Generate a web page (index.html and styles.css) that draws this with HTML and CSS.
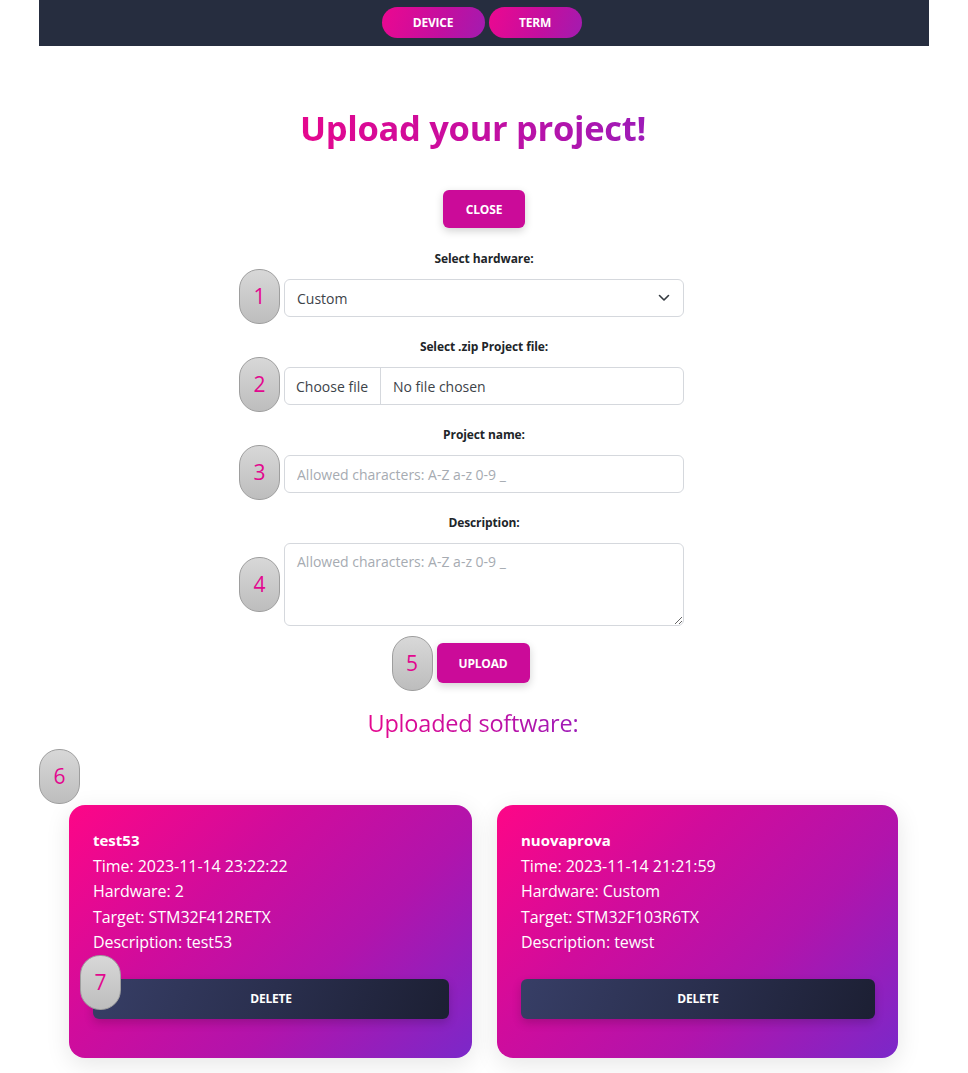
FILE: index.html
```html
<!DOCTYPE html>
<html lang="en">
<head>
<meta charset="utf-8">
<title>Upload your project</title>
<link rel="stylesheet" href="styles.css">
</head>
<body>
<header class="topbar">
  <nav class="topbar-nav">
    <a class="pill" href="#">DEVICE</a>
    <a class="pill" href="#">TERM</a>
  </nav>
</header>

<main class="page">
  <h1 class="title"><span class="grad-text">Upload your project!</span></h1>

  <button class="btn btn-magenta btn-close" type="button">CLOSE</button>

  <form class="upload-form">
    <div class="field">
      <label class="field-label" for="hw">Select hardware:</label>
      <div class="control-wrap">
        <span class="step">1</span>
        <select id="hw" class="control select">
          <option>Custom</option>
        </select>
        <svg class="chevron" width="12" height="8" viewBox="0 0 12 8"><path d="M1.5 1.5 6 6l4.5-4.5" fill="none" stroke="#343a40" stroke-width="1.6" stroke-linecap="round" stroke-linejoin="round"/></svg>
      </div>
    </div>

    <div class="field">
      <label class="field-label" for="zip">Select .zip Project file:</label>
      <div class="control-wrap">
        <span class="step">2</span>
        <div class="control file">
          <span class="file-btn">Choose file</span>
          <span class="file-name">No file chosen</span>
        </div>
      </div>
    </div>

    <div class="field">
      <label class="field-label" for="pname">Project name:</label>
      <div class="control-wrap">
        <span class="step">3</span>
        <input id="pname" class="control" type="text" placeholder="Allowed characters: A-Z a-z 0-9 _">
      </div>
    </div>

    <div class="field">
      <label class="field-label" for="pdesc">Description:</label>
      <div class="control-wrap">
        <span class="step step-mid">4</span>
        <textarea id="pdesc" class="control textarea" placeholder="Allowed characters: A-Z a-z 0-9 _"></textarea>
      </div>
    </div>

    <div class="upload-row">
      <span class="step step-upload">5</span>
      <button class="btn btn-magenta btn-upload" type="button">UPLOAD</button>
    </div>
  </form>

  <h2 class="subtitle"><span class="grad-text">Uploaded software:</span></h2>

  <section class="cards">
    <span class="step step-cards">6</span>
    <article class="card">
      <div class="card-name">test53</div>
      <div class="card-line">Time: 2023-11-14 23:22:22</div>
      <div class="card-line">Hardware: 2</div>
      <div class="card-line">Target: STM32F412RETX</div>
      <div class="card-line">Description: test53</div>
      <div class="delete-wrap">
        <span class="step step-delete">7</span>
        <button class="btn btn-dark" type="button">DELETE</button>
      </div>
    </article>
    <article class="card">
      <div class="card-name">nuovaprova</div>
      <div class="card-line">Time: 2023-11-14 21:21:59</div>
      <div class="card-line">Hardware: Custom</div>
      <div class="card-line">Target: STM32F103R6TX</div>
      <div class="card-line">Description: tewst</div>
      <div class="delete-wrap">
        <button class="btn btn-dark" type="button">DELETE</button>
      </div>
    </article>
  </section>
</main>
</body>
</html>
```

FILE: styles.css
```css
* { box-sizing: border-box; }

html, body {
  margin: 0;
  padding: 0;
  background: #ffffff;
  font-family: "Open Sans", "Noto Sans", sans-serif;
  color: #212529;
}

/* top navigation bar */
.topbar {
  width: 890px;
  height: 46px;
  margin: 0 auto;
  background: #262d3f;
  display: flex;
  justify-content: center;
}

.topbar-nav {
  display: flex;
  gap: 4px;
  padding-top: 7px;
  margin-left: -5px;
}

.pill {
  display: flex;
  align-items: center;
  justify-content: center;
  height: 31px;
  padding: 0 32px;
  border-radius: 16px;
  background: linear-gradient(110deg, #ec0890 0%, #c10fa0 60%, #a21cb0 100%);
  color: #fff;
  font-size: 12px;
  font-weight: 700;
  text-decoration: none;
  letter-spacing: -0.2px;
}
.pill:first-child { width: 103px; }
.pill:last-child { width: 93px; }

/* main column */
.page {
  display: flex;
  flex-direction: column;
  align-items: center;
}

.grad-text {
  background: linear-gradient(90deg, #e5078e 0%, #c30fa2 55%, #9d1bb8 100%);
  -webkit-background-clip: text;
  background-clip: text;
  color: transparent;
}

.title {
  margin: 58px 22px 0 0;
  font-size: 34.5px;
  line-height: 48px;
  font-weight: 700;
  letter-spacing: -0.3px;
}

.subtitle {
  margin: 24px 22px 0 0;
  font-size: 23.5px;
  line-height: 32px;
  font-weight: 400;
  letter-spacing: -0.2px;
}

.btn {
  border: none;
  font-family: inherit;
  font-size: 12px;
  font-weight: 700;
  color: #fff;
  cursor: pointer;
  letter-spacing: -0.2px;
}

.btn-magenta {
  background: #cb0b99;
  border-radius: 6px;
  box-shadow: 0 3px 8px rgba(0, 0, 0, 0.18);
}

.btn-close {
  margin-top: 38px;
  width: 82px;
  height: 38px;
}

/* form */
.upload-form {
  width: 400px;
  margin-top: 23px;
  display: flex;
  flex-direction: column;
  align-items: center;
}

.field {
  width: 400px;
  display: flex;
  flex-direction: column;
  align-items: center;
  margin-bottom: 22px;
}

.field-label {
  font-size: 12px;
  line-height: 16px;
  font-weight: 700;
  color: #212529;
  margin-bottom: 12px;
  letter-spacing: -0.1px;
}

.control-wrap {
  position: relative;
  width: 400px;
}

.control {
  display: block;
  width: 100%;
  height: 38px;
  border: 1px solid #d5d8dd;
  border-radius: 6px;
  background: #fff;
  font-family: inherit;
  font-size: 14px;
  color: #3d4349;
  padding: 0 12px;
  outline: none;
}

.control::placeholder { color: #a6abb2; }

.select {
  -webkit-appearance: none;
  appearance: none;
}

.chevron {
  position: absolute;
  right: 14px;
  top: 15px;
  pointer-events: none;
}

.file {
  display: flex;
  align-items: stretch;
  padding: 0;
  overflow: hidden;
}
.file-btn {
  display: flex;
  align-items: center;
  width: 96px;
  padding-left: 11px;
  border-right: 1px solid #d5d8dd;
  color: #3d4349;
}
.file-name {
  display: flex;
  align-items: center;
  padding-left: 12px;
  color: #3d4349;
}

.textarea {
  height: 83px;
  padding-top: 8px;
  resize: vertical;
}

.upload-row {
  position: relative;
  margin-top: -5px;
  margin-left: -2px;
}

.btn-upload {
  width: 93px;
  height: 40px;
}

/* numbered markers laid over the controls */
.step {
  position: absolute;
  left: -45px;
  top: -10px;
  width: 41px;
  height: 55px;
  border-radius: 20px;
  border: 1px solid #9e9e9e;
  background: linear-gradient(180deg, #d8d8d8 0%, #bdbdbd 100%);
  color: #e2088f;
  font-size: 21px;
  line-height: 1;
  display: flex;
  align-items: center;
  justify-content: center;
  z-index: 2;
}
.step-mid { top: 14px; }
.step-upload { top: -7px; }
.step-cards { left: -30px; top: -56px; }
.step-delete { left: -13px; top: -24px; }

/* uploaded cards */
.cards {
  position: relative;
  margin-top: 66px;
  margin-right: 1px;
  display: grid;
  grid-template-columns: 403px 401px;
  gap: 25px;
  margin-bottom: 20px;
}

.card {
  border-radius: 16px;
  padding: 23px 23px 39px 24px;
  background: linear-gradient(135deg, #fd0687 0%, #d00c9c 35%, #b114ac 65%, #7b28c9 100%);
  color: #fff;
  box-shadow: 0 6px 24px rgba(0, 0, 0, 0.10);
}

.card-name {
  font-size: 15px;
  font-weight: 700;
  line-height: 25.5px;
}

.card-line {
  font-size: 16px;
  line-height: 25.5px;
  letter-spacing: -0.05px;
}

.delete-wrap {
  position: relative;
  margin-top: 23px;
}

.btn-dark {
  display: block;
  width: 100%;
  height: 40px;
  border-radius: 6px;
  background: linear-gradient(110deg, #373e66 0%, #2a2f4e 50%, #1c1f33 100%);
  box-shadow: 0 4px 10px rgba(0, 0, 0, 0.18);
}
```
